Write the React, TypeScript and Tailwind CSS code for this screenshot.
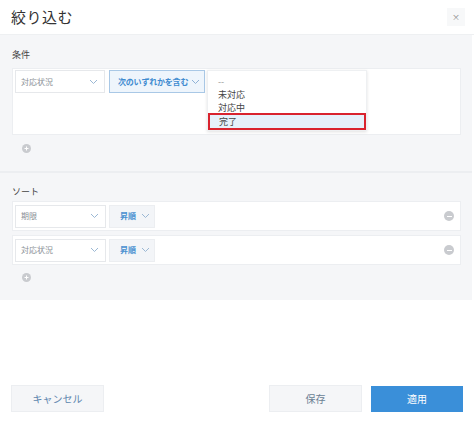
import React from 'react';

const font = { fontFamily: '"Noto Sans CJK JP", "Noto Sans", sans-serif' };

function Chevron({ className = '' }: { className?: string }) {
  return (
    <svg className={className} width="9" height="6" viewBox="0 0 9 6" fill="none">
      <path d="M1 1l3.5 3.5L8 1" stroke="currentColor" strokeWidth="1" />
    </svg>
  );
}

function Plus() {
  return (
    <div className="w-[9px] h-[9px] rounded-full bg-[#c9cbcf] flex items-center justify-center">
      <svg width="5" height="5" viewBox="0 0 5 5">
        <path d="M2.5 0.5v4M0.5 2.5h4" stroke="#fff" strokeWidth="1" />
      </svg>
    </div>
  );
}

function Minus() {
  return (
    <div className="w-[10px] h-[10px] rounded-full bg-[#c9cbcf] flex items-center justify-center">
      <div className="w-[5px] h-px bg-white" />
    </div>
  );
}

function FieldSelect({ label, w }: { label: string; w: string }) {
  return (
    <div className={`${w} h-[23px] bg-white border border-[#e6e8eb] flex items-center justify-between pl-[5px] pr-[6px] text-[8px] text-[#8a8f96]`}>
      <span>{label}</span>
      <Chevron className="text-[#9bb8d4]" />
    </div>
  );
}

function OrderSelect() {
  return (
    <div className="w-[46px] h-[23px] bg-[#f3f5f8] border border-[#eceef1] flex items-center justify-between pl-[10px] pr-[4px] text-[8px] font-bold text-[#4a90d0]">
      <span>昇順</span>
      <Chevron className="text-[#9bb8d4]" />
    </div>
  );
}

export default function App() {
  return (
    <div className="w-[474px] h-[425px] bg-white flex flex-col" style={font}>
      {/* header */}
      <div className="h-[35px] flex items-center justify-between pl-[11px] pr-[9px] border-b border-[#eef0f2]">
        <div className="text-[15px] text-[#333] tracking-[0.5px] pt-[1px]">絞り込む</div>
        <div className="w-[18px] h-[18px] bg-[#f7f8f9] flex items-center justify-center text-[8px] text-[#888]">×</div>
      </div>

      {/* conditions */}
      <div className="w-[472px] bg-[#f5f6f8] pt-[13px] pl-[12px] pr-[11px] h-[136px]">
        <div className="text-[9px] text-[#444] h-[20px]">条件</div>
        <div className="h-[67px] bg-white border border-[#eceef1] pt-[1px] pl-[2px] flex gap-[4px] items-start">
          <FieldSelect label="対応状況" w="w-[90px]" />
          <div className="relative">
            <div className="w-[96px] h-[23px] bg-[#eef5fc] border border-[#a9c8e6] flex items-center justify-between pl-[8px] pr-[4px] text-[8px] font-bold text-[#3f8bd0] whitespace-nowrap tracking-[-0.2px]">
              <span>次のいずれかを含む</span>
              <Chevron className="text-[#8fb2d6]" />
            </div>
            <div className="absolute left-[98px] top-0 w-[160px] h-[61px] bg-white shadow-[0_1px_3px_rgba(0,0,0,0.12)] border border-[#eef0f2] text-[9px] text-[#444] pt-[4px]">
              <div className="h-[13px] pl-[10px] leading-[13px] text-[#999]">--</div>
              <div className="h-[13px] pl-[10px] leading-[13px]">未対応</div>
              <div className="h-[12px] pl-[10px] leading-[13px]">対応中</div>
              <div className="h-[17px] pl-[9px] leading-[13px] bg-[#e6f0fa] border-2 border-[#d9232e]">完了</div>
            </div>
          </div>
        </div>
        <div className="pl-[10px] pt-[9px]">
          <Plus />
        </div>
      </div>

      <div className="w-[472px] h-[2px] bg-[#eceef1]" />

      {/* sort */}
      <div className="w-[472px] bg-[#f5f6f8] pt-[12px] pl-[12px] pr-[11px] h-[127px]">
        <div className="text-[9px] text-[#444] h-[16px]">ソート</div>
        <div className="flex flex-col gap-[4px]">
          {['期限', '対応状況'].map((l) => (
            <div key={l} className="h-[30px] bg-white border border-[#eceef1] pl-[2px] pr-[6px] flex items-center">
              <FieldSelect label={l} w="w-[91px]" />
              <div className="ml-[3px]">
                <OrderSelect />
              </div>
              <div className="ml-auto">
                <Minus />
              </div>
            </div>
          ))}
        </div>
        <div className="pl-[10px] pt-[8px]">
          <Plus />
        </div>
      </div>

      {/* footer */}
      <div className="flex-1" />
      <div className="h-[27px] mb-[13px] px-[11px] flex items-center">
        <button className="w-[93px] h-[27px] bg-[#f5f6f8] border border-[#eceef1] text-[10px] text-[#5b84ad]">キャンセル</button>
        <div className="flex-1" />
        <button className="w-[93px] h-[27px] bg-[#f5f6f8] border border-[#eceef1] text-[10px] text-[#6b7f94]">保存</button>
        <button className="ml-[9px] w-[92px] h-[26px] bg-[#3a8fd9] text-[10px] text-white">適用</button>
      </div>
    </div>
  );
}
